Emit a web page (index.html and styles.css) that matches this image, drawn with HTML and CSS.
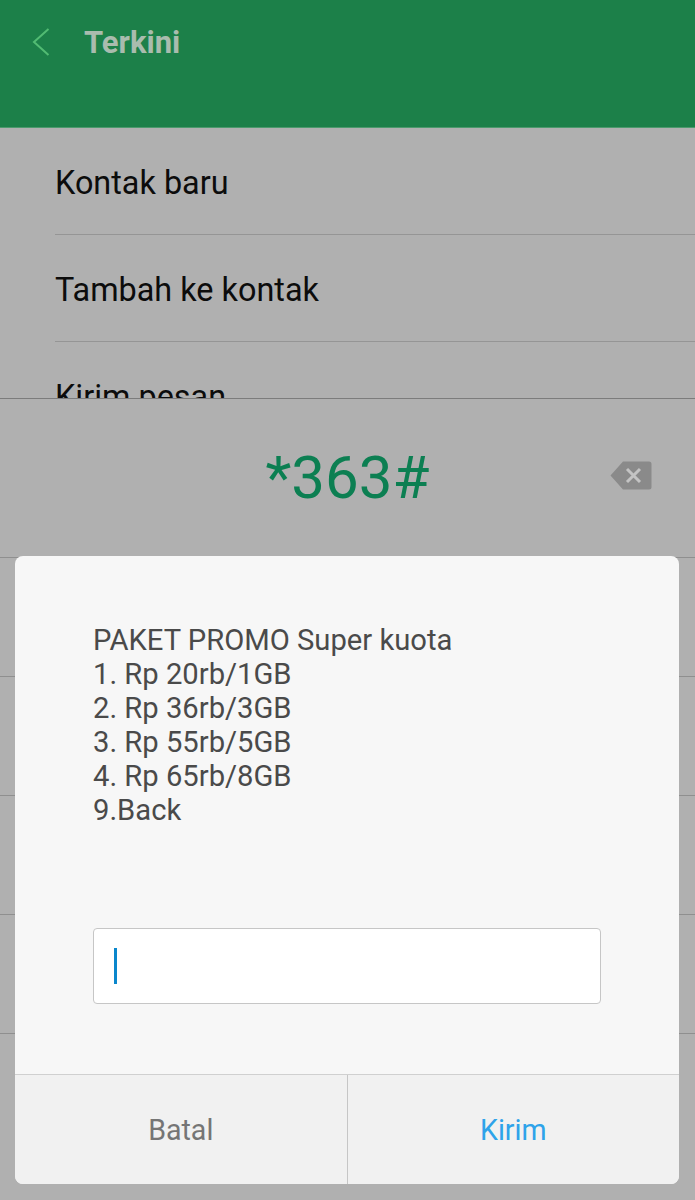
FILE: index.html
```html
<!DOCTYPE html>
<html lang="id">
<head>
<meta charset="utf-8">
<title>Terkini</title>
<link rel="stylesheet" href="styles.css">
</head>
<body>
<div class="screen">
  <header class="appbar">
    <svg class="back" width="18" height="28" viewBox="0 0 18 28"><path d="M16.5 1 L2 14 L16.5 27" fill="none" stroke="#52bb73" stroke-width="2"/></svg>
    <span class="title">Terkini</span>
  </header>
  <ul class="menu">
    <li class="menu-item">Kontak baru</li>
    <li class="menu-item">Tambah ke kontak</li>
    <li class="menu-item">Kirim pesan</li>
  </ul>
  <section class="dialer">
    <div class="display">
      <span class="number">*363#</span>
      <svg class="erase" width="42" height="30" viewBox="0 0 42 30"><path d="M13 0.5 H39 a2.5 2.5 0 0 1 2.5 2.5 V26 a2.5 2.5 0 0 1 -2.5 2.5 H13 L0.5 14.5 Z" fill="#8a8a8a"/><path d="M17 8 L30 21 M30 8 L17 21" stroke="#c4c4c4" stroke-width="3" fill="none"/></svg>
    </div>
    <div class="key-row"></div>
    <div class="key-row"></div>
    <div class="key-row"></div>
    <div class="key-row"></div>
    <div class="key-row"></div>
  </section>
  <div class="dialog">
    <div class="dialog-body">
      <p class="message">PAKET PROMO Super kuota<br>1. Rp 20rb/1GB<br>2. Rp 36rb/3GB<br>3. Rp 55rb/5GB<br>4. Rp 65rb/8GB<br>9.Back</p>
      <div class="input"><span class="caret"></span></div>
    </div>
    <div class="actions">
      <div class="action cancel">Batal</div>
      <div class="action send">Kirim</div>
    </div>
  </div>
</div>
</body>
</html>
```
FILE: styles.css
```css
* { box-sizing: border-box; }
html, body { margin: 0; padding: 0; }
body { background: #b0b0b0; font-family: Roboto, "Liberation Sans", sans-serif; }
.screen { position: relative; width: 695px; height: 1200px; overflow: hidden; background: #b0b0b0; }
.appbar { height: 128px; background: #1c8049; border-bottom: 1px solid #4c9a6d; display: flex; align-items: flex-start; padding: 28px 0 0 32px; }
.back { display: block; }
.title { margin-left: 34px; margin-top: -3px; font-size: 31px; line-height: 36px; font-weight: 700; color: #a9bcae; }
.menu { list-style: none; margin: 0; padding: 0 0 0 55px; height: 270px; overflow: hidden; }
.menu-item { height: 107px; padding-top: 36px; font-size: 32.4px; line-height: 38px; color: #0c0c0c; border-bottom: 1px solid #959595; }
.dialer { border-top: 1px solid #7c7c7c; }
.display { height: 159px; display: flex; align-items: center; justify-content: center; position: relative; border-bottom: 1px solid #8f8f8f; }
.number { font-size: 60px; line-height: 70px; color: #0c7f52; }
.erase { position: absolute; left: 610px; top: 62px; }
.key-row { height: 119px; border-bottom: 1px solid #8f8f8f; }
.key-row:last-child { border-bottom: 0; }
.dialog { position: absolute; left: 15px; top: 556px; width: 664px; height: 628px; border-radius: 8px; overflow: hidden; background: #f7f7f7; display: flex; flex-direction: column; }
.dialog-body { flex: 1; padding: 67px 78px 0; }
.message { margin: 0; font-size: 29.2px; line-height: 34px; color: #4a4a4a; }
.input { margin-top: 101px; height: 76px; background: #fff; border: 1px solid #c6c6c6; border-radius: 4px; padding: 19px 0 0 20px; }
.caret { display: block; width: 3px; height: 36px; background: #0a87cc; }
.actions { height: 110px; display: flex; border-top: 1px solid #d0d0d0; background: #f1f1f1; }
.action { flex: 1; display: flex; align-items: center; justify-content: center; font-size: 28.6px; }
.cancel { color: #757575; border-right: 1px solid #c6c6c6; }
.send { color: #2ea3ea; }
```
